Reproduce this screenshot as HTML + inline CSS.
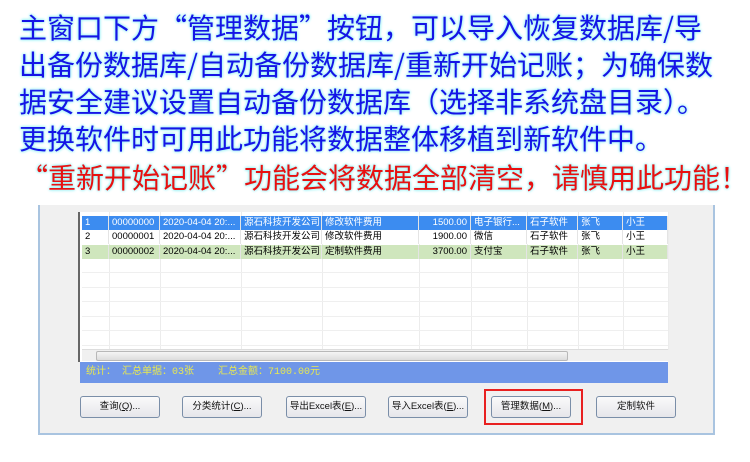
<!DOCTYPE html>
<html><head><meta charset="utf-8"><style>
*{margin:0;padding:0;box-sizing:border-box}
body{width:750px;height:462px;background:#fff;position:relative;overflow:hidden;font-family:"Liberation Sans","Noto Sans CJK SC",sans-serif}
.t{position:absolute;left:19px;font-size:28px;line-height:30px;white-space:nowrap;font-family:"Noto Sans CJK SC",sans-serif;color:#1414e6;text-shadow:0 0 3px #9ee,0 0 3px #bff,0 0 2px #aef}
.r{color:#e81010}
.win{position:absolute;left:38px;top:205px;width:677px;height:230px;background:#f0f0f0;border:2px solid #a9c4e0;border-top:none}
.grid{position:absolute;left:78px;top:212px;width:590px;height:150px;background:#fff;border-left:2px solid #666}
.row{position:absolute;left:2px;height:14px;font-size:9.5px;line-height:14px;width:586px}
.c{position:absolute;top:0;height:100%;padding-left:3px;white-space:nowrap;overflow:hidden;border-right:1px solid #e4e4e4}
.vl{position:absolute;top:0;bottom:12px;width:1px;background:#ececec}
.hl{position:absolute;left:2px;right:0;height:1px;background:#efefef}
.sb{position:absolute;left:80px;top:362px;width:588px;height:21px;background:#6f96e8;color:#e8e850;font-size:10px;line-height:21px;padding-left:6px;font-family:"Liberation Mono","Noto Sans CJK SC",monospace}
.btn{position:absolute;top:396px;width:80px;height:22px;border:1px solid #7a8ea8;border-radius:3px;background:linear-gradient(#fafafa,#e6e6ea);font-size:9.5px;text-align:center;line-height:20px;color:#111}
</style></head><body>
<div class="t" style="top:12px">主窗口下方“管理数据”按钮，可以导入恢复数据库/导</div>
<div class="t" style="top:49px">出备份数据库/自动备份数据库/重新开始记账；为确保数</div>
<div class="t" style="top:86px">据安全建议设置自动备份数据库（选择非系统盘目录）。</div>
<div class="t" style="top:123px">更换软件时可用此功能将数据整体移植到新软件中。</div>
<div class="t r" style="top:162px;left:20px">“重新开始记账”功能会将数据全部清空，请慎用此功能！</div>

<div class="win"></div>
<div class="grid">
 <div class="vl" style="left:29px"></div><div class="vl" style="left:80px"></div><div class="vl" style="left:161px"></div><div class="vl" style="left:242px"></div><div class="vl" style="left:339px"></div><div class="vl" style="left:391px"></div><div class="vl" style="left:447px"></div><div class="vl" style="left:498px"></div><div class="vl" style="left:543px"></div><div class="vl" style="left:588px"></div>
 <div class="hl" style="top:60px"></div><div class="hl" style="top:75px"></div><div class="hl" style="top:89px"></div><div class="hl" style="top:104px"></div><div class="hl" style="top:118px"></div><div class="hl" style="top:133px"></div>
 <div class="row" style="top:4px;background:#3c8cf0;color:#fff">
  <div class="c" style="left:0;width:27px">1</div><div class="c" style="left:27px;width:51px">00000000</div><div class="c" style="left:78px;width:81px">2020-04-04 20:...</div><div class="c" style="left:159px;width:81px">源石科技开发公司</div><div class="c" style="left:240px;width:97px">修改软件费用</div><div class="c" style="left:337px;width:52px;text-align:right;padding-right:3px">1500.00</div><div class="c" style="left:389px;width:56px">电子银行...</div><div class="c" style="left:445px;width:51px">石子软件</div><div class="c" style="left:496px;width:45px">张飞</div><div class="c" style="left:541px;width:45px">小王</div>
 </div>
 <div class="row" style="top:18px;background:#fff">
  <div class="c" style="left:0;width:27px">2</div><div class="c" style="left:27px;width:51px">00000001</div><div class="c" style="left:78px;width:81px">2020-04-04 20:...</div><div class="c" style="left:159px;width:81px">源石科技开发公司</div><div class="c" style="left:240px;width:97px">修改软件费用</div><div class="c" style="left:337px;width:52px;text-align:right;padding-right:3px">1900.00</div><div class="c" style="left:389px;width:56px">微信</div><div class="c" style="left:445px;width:51px">石子软件</div><div class="c" style="left:496px;width:45px">张飞</div><div class="c" style="left:541px;width:45px">小王</div>
 </div>
 <div class="row" style="top:33px;background:#cfe6bd">
  <div class="c" style="left:0;width:27px">3</div><div class="c" style="left:27px;width:51px">00000002</div><div class="c" style="left:78px;width:81px">2020-04-04 20:...</div><div class="c" style="left:159px;width:81px">源石科技开发公司</div><div class="c" style="left:240px;width:97px">定制软件费用</div><div class="c" style="left:337px;width:52px;text-align:right;padding-right:3px">3700.00</div><div class="c" style="left:389px;width:56px">支付宝</div><div class="c" style="left:445px;width:51px">石子软件</div><div class="c" style="left:496px;width:45px">张飞</div><div class="c" style="left:541px;width:45px">小王</div>
 </div>
 <div style="position:absolute;left:2px;right:0;top:137px;height:12px;background:#f0f0f0;border-top:1px solid #ddd">
  <div style="position:absolute;left:14px;top:1px;width:472px;height:10px;background:linear-gradient(#f4f4f4,#dcdcdc);border:1px solid #b8b8b8;border-radius:2px"></div>
 </div>
</div>
<div class="sb">统计： 汇总单据：03张&nbsp;&nbsp;&nbsp;&nbsp;汇总金额：7100.00元</div>
<div class="btn" style="left:80px">查询(<u>Q</u>)...</div>
<div class="btn" style="left:182px">分类统计(<u>C</u>)...</div>
<div class="btn" style="left:286px">导出Excel表(<u>E</u>)...</div>
<div class="btn" style="left:388px">导入Excel表(<u>E</u>)...</div>
<div class="btn" style="left:491px">管理数据(<u>M</u>)...</div>
<div class="btn" style="left:596px">定制软件</div>
<div style="position:absolute;left:484px;top:389px;width:99px;height:36px;border:2px solid #e82020"></div>
</body></html>
